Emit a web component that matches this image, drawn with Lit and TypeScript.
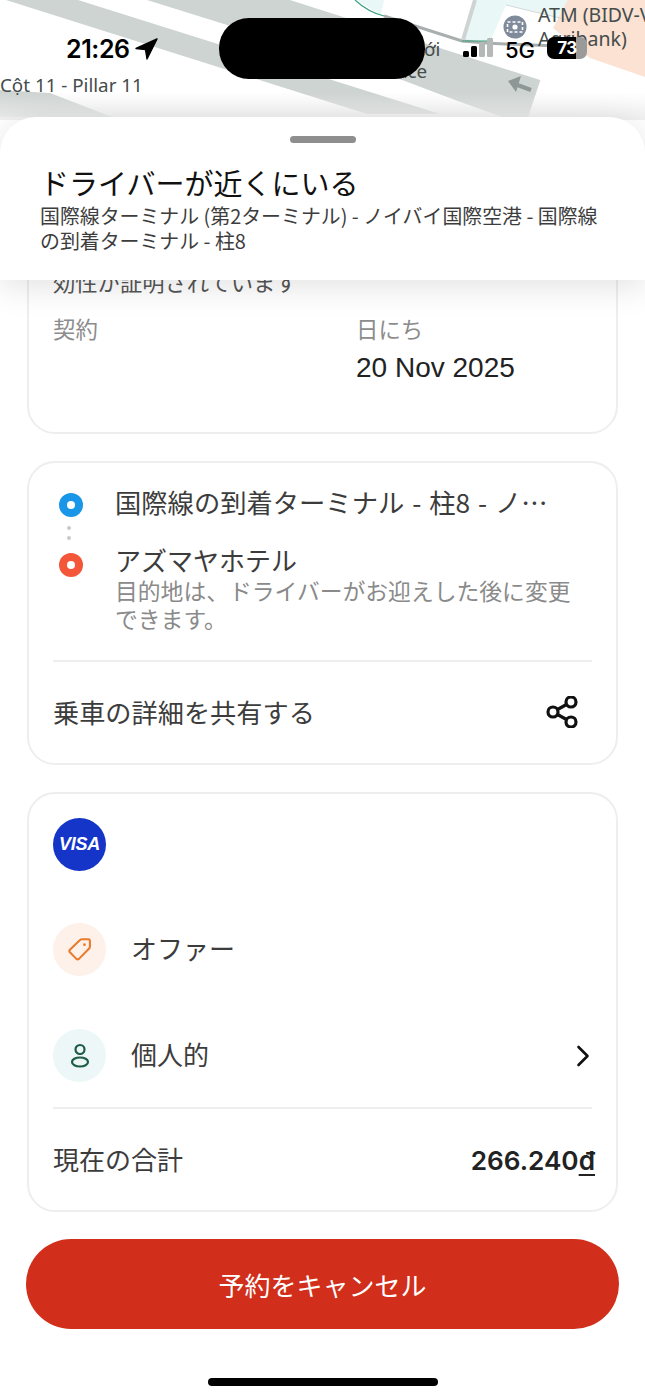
import { LitElement, html, css, svg } from "lit";
import { customElement } from "lit/decorators.js";

const mapArt = svg`
  <rect width="645" height="140" fill="#ffffff"/>
  <polygon points="78,0 440,114 367,114 6,0" fill="#ced4d2"/>
  <polygon points="147,0 290,0 540,80 525,125 455,100 397,78" fill="#ced4d2"/>
  <polygon points="0,90 50,93 112,117 0,117" fill="#ced4d2"/>
  <polygon points="356,0 384,0 381,15" fill="#e9f7f6"/>
  <polygon points="476,0 568,0 568,20 506,5 490,42 462,41" fill="#e9f7f6"/>
  <polygon points="568,0 645,0 645,77 590,58 553,28" fill="#fbe2d2"/>
  <path d="M506 5 L568 20" fill="none" stroke="#d5d8d8" stroke-width="1"/>
  <path d="M540 80 L525 125" fill="none" stroke="#d5d8d8" stroke-width="1"/>
  <path d="M355 0 Q368 12 384 16" fill="none" stroke="#3aa27c" stroke-width="1.2"/>
  <path d="M384 16 L462 41 Q490 44 560 46" fill="none" stroke="#a9aeae" stroke-width="3"/>
  <path d="M475 0 L463 40" fill="none" stroke="#ced4d2" stroke-width="4"/>
  <path d="M462 41 H490 L492 38" fill="none" stroke="#3aa27c" stroke-width="1.2"/>
  <circle cx="515" cy="27" r="11.5" fill="#7f8a9b"/>
  <rect x="507.5" y="22" width="15" height="10" fill="none" stroke="#ffffff" stroke-width="1.6" stroke-dasharray="3 2"/>
  <circle cx="515" cy="27" r="2.6" fill="#ffffff"/>
  <path d="M512 83 L531 90" fill="none" stroke="#8f9796" stroke-width="4"/>
  <polygon points="508,81 521,76 516,92" fill="#8f9796"/>
`;

@customElement("app-root")
export class AppRoot extends LitElement {
  static styles = css`
    :host {
      display: block;
      position: relative;
      width: 645px;
      height: 1400px;
      overflow: hidden;
      background: #ffffff;
      font-family: "Noto Sans CJK JP", "Liberation Sans", sans-serif;
      color: #333333;
    }
    .map {
      position: absolute;
      inset: 0 0 auto 0;
      height: 140px;
      overflow: hidden;
    }
    .map svg { display: block; width: 645px; height: 140px; }
    .fade {
      position: absolute;
      inset: 92px 0 auto 0;
      height: 28px;
      background: linear-gradient(rgba(255,255,255,0), rgba(238,238,238,0.92));
    }
    .lbl {
      position: absolute;
      font-family: "Noto Sans", "Open Sans", sans-serif;
      font-size: 18.8px;
      line-height: 24px;
      color: #444c4c;
      white-space: nowrap;
    }
    .l1 { left: 0; top: 73px; }
    .l2 { left: 538px; top: 3px; font-size: 19.5px; }
    .l3 { left: 538px; top: 27px; font-size: 19.5px; }
    .l4 { left: 424px; top: 37px; }
    .l5 { left: 397px; top: 59px; }
    .pill {
      position: absolute;
      left: 219px;
      top: 18px;
      width: 206px;
      height: 61px;
      border-radius: 30px;
      background: #000000;
    }
    .time {
      position: absolute;
      left: 66px;
      top: 32px;
      display: flex;
      align-items: center;
      gap: 5px;
      font-family: "Inter", sans-serif;
      font-weight: 600;
      font-size: 25px;
      line-height: 34px;
      color: #000000;
      letter-spacing: -0.4px;
    }
    .signal {
      position: absolute;
      left: 463px;
      top: 38px;
      display: flex;
      align-items: flex-end;
      gap: 2px;
      height: 19px;
    }
    .signal i { display: block; width: 6px; border-radius: 1.5px; background: #000000; }
    .signal i:nth-child(1) { height: 6px; }
    .signal i:nth-child(2) { height: 11px; }
    .signal i:nth-child(3) { height: 15px; background: #b4b8b7; }
    .signal i:nth-child(4) { height: 19px; background: #b4b8b7; }
    .fiveg {
      position: absolute;
      left: 505px;
      top: 33px;
      font-family: "Inter", sans-serif;
      font-weight: 500;
      font-size: 22px;
      line-height: 34px;
      color: #000000;
    }
    .batt {
      position: absolute;
      left: 547px;
      top: 37px;
      width: 40px;
      height: 22px;
      border-radius: 7px;
      background: linear-gradient(90deg, #000000 0, #000000 73%, #9a9a9a 73%);
      color: #ffffff;
      display: flex;
      align-items: center;
      justify-content: center;
      font-family: "Inter", sans-serif;
      font-weight: 700;
      font-size: 17px;
      letter-spacing: -0.5px;
    }
    .sheet { position: relative; padding-top: 117px; }
    .head {
      position: relative;
      z-index: 2;
      height: 163px;
      box-sizing: border-box;
      padding: 19px 40px 0;
      background: #ffffff;
      border-radius: 36px 36px 0 0;
      box-shadow: 0 6px 34px rgba(0,0,0,0.12);
    }
    .grab {
      width: 66px;
      height: 7px;
      margin: 0 auto;
      border-radius: 4px;
      background: #8e8e8e;
    }
    .title {
      margin: 19px 0 0;
      font-size: 29px;
      line-height: 40px;
      font-weight: 400;
      color: #111111;
      white-space: nowrap;
    }
    .sub {
      margin: 1px 0 0;
      font-size: 19.9px;
      line-height: 25px;
      color: #3d3d3d;
      width: 570px;
    }
    .body {
      display: flex;
      flex-direction: column;
      gap: 27px;
      padding: 0 27px;
      height: 1100px;
      overflow: hidden;
    }
    .card {
      border: 2px solid #eeeeee;
      border-radius: 28px;
      background: #ffffff;
      box-sizing: border-box;
      flex: none;
    }
    .c1 {
      height: 200px;
      margin-top: -46px;
      padding: 30px 24px 0;
    }
    .c1 .note {
      font-size: 22.3px;
      line-height: 30px;
      color: #555555;
      white-space: nowrap;
    }
    .grid {
      display: grid;
      grid-template-columns: 303px 1fr;
      margin-top: 16px;
    }
    .k { font-size: 22.4px; line-height: 32px; color: #8c8c8c; }
    .v {
      margin-top: 5px;
      font-family: "Liberation Sans", sans-serif;
      font-size: 28px;
      line-height: 38px;
      color: #222222;
    }
    .c2 { height: 304px; padding: 0 24px; }
    .route { display: grid; grid-template-columns: 38px 1fr; column-gap: 24px; padding-top: 21px; }
    .dot {
      width: 24px;
      height: 24px;
      border-radius: 50%;
      display: flex;
      align-items: center;
      justify-content: center;
      margin-left: 6px;
    }
    .dot::after {
      content: "";
      width: 8px;
      height: 8px;
      border-radius: 50%;
      background: #ffffff;
    }
    .dot.blue { background: #1996e8; margin-top: 9px; }
    .dot.red { background: #f4563a; margin-top: 10px; }
    .ticks {
      display: flex;
      flex-direction: column;
      align-items: center;
      gap: 6px;
      width: 32px;
      padding-top: 6px;
    }
    .ticks i { width: 4px; height: 4px; border-radius: 50%; background: #c6cacc; }
    .t {
      font-size: 26px;
      line-height: 36px;
      color: #3c3c3c;
      white-space: nowrap;
    }
    .t.clip {
      width: 433px;
      overflow: hidden;
      text-overflow: ellipsis;
      font-size: 26.3px;
      word-spacing: 2px;
    }
    .t.tight { line-height: 34px; }
    .col { display: flex; flex-direction: column; }
    .gap { height: 23px; }
    .hint {
      font-size: 22.8px;
      line-height: 28px;
      color: #8a8a8a;
      width: 470px;
    }
    .rule { height: 2px; background: #eeeeee; }
    .c2 .rule { margin-top: 27px; }
    .row { display: flex; align-items: center; justify-content: space-between; }
    .share { height: 100px; padding-right: 14px; }
    .share .t { font-size: 26.2px; }
    .share svg { display: block; }
    .c3 { height: 420px; padding: 24px 24px 0; }
    .visa {
      width: 53px;
      height: 53px;
      border-radius: 50%;
      background: #1435c8;
      color: #ffffff;
      display: flex;
      align-items: center;
      justify-content: center;
      font-family: "Liberation Sans", sans-serif;
      font-style: italic;
      font-weight: 700;
      font-size: 18px;
      letter-spacing: -0.3px;
    }
    .opt { display: flex; align-items: center; gap: 25px; height: 53px; }
    .opt .t { padding-bottom: 4px; }
    .opt.o1 { margin-top: 52px; }
    .opt.o2 { margin-top: 53px; padding-right: 2px; }
    .circle {
      width: 53px;
      height: 53px;
      border-radius: 50%;
      flex: none;
      display: flex;
      align-items: center;
      justify-content: center;
    }
    .orange { background: #fdf1ea; }
    .teal { background: #edf7f7; }
    .grow { flex: 1; }
    .c3 .rule { margin-top: 25px; }
    .total { height: 104px; margin-right: -3px; }
    .total .t { padding-bottom: 4px; }
    .amount {
      padding-bottom: 2px;
      font-family: "Inter", sans-serif;
      font-weight: 600;
      font-size: 26.2px;
      color: #222222;
    }
    .amount u { text-underline-offset: 4px; text-decoration-thickness: 2px; }
    .cancel {
      flex: none;
      margin: 0 -1px;
      height: 90px;
      border: 0;
      border-radius: 45px;
      background: #d12e1b;
      color: #ffffff;
      display: flex;
      align-items: center;
      justify-content: center;
      font-family: inherit;
      font-size: 26px;
      font-weight: 400;
    }
    .home {
      position: absolute;
      left: 208px;
      top: 1378px;
      width: 230px;
      height: 8px;
      border-radius: 4px;
      background: #000000;
    }
  `;

  render() {
    return html`
      <div class="map">
        <svg viewBox="0 0 645 140" aria-hidden="true">${mapArt}</svg>
        <div class="fade"></div>
        <span class="lbl l1">Cột 11 - Pillar 11</span>
        <span class="lbl l2">ATM (BIDV-V</span>
        <span class="lbl l3">Agribank)</span>
        <span class="lbl l4">ới</span>
        <span class="lbl l5">ace</span>
      </div>
      <div class="time">
        21:26
        <svg width="23" height="22" viewBox="0 0 23 22"><path d="M22 1 L1 10.5 L10.5 11.5 L12 21 Z" fill="#000" stroke="#000" stroke-width="1.4" stroke-linejoin="round"/></svg>
      </div>
      <div class="pill"></div>
      <div class="signal"><i></i><i></i><i></i><i></i></div>
      <div class="fiveg">5G</div>
      <div class="batt">73</div>

      <div class="sheet">
        <header class="head">
          <div class="grab"></div>
          <h1 class="title">ドライバーが近くにいる</h1>
          <p class="sub">国際線ターミナル (第2ターミナル) - ノイバイ国際空港 - 国際線の到着ターミナル - 柱8</p>
        </header>
        <div class="body">
          <section class="card c1">
            <div class="note">効性が証明されています</div>
            <div class="grid">
              <div class="k">契約</div>
              <div>
                <div class="k">日にち</div>
                <div class="v">20 Nov 2025</div>
              </div>
            </div>
          </section>

          <section class="card c2">
            <div class="route">
              <div class="col">
                <span class="dot blue"></span>
              </div>
              <div class="t clip">国際線の到着ターミナル - 柱8 - ノイバイ国際空港</div>
              <div class="ticks"><i></i><i></i></div>
              <div class="gap"></div>
              <div class="col">
                <span class="dot red"></span>
              </div>
              <div class="col">
                <div class="t tight">アズマヤホテル</div>
                <div class="hint">目的地は、ドライバーがお迎えした後に変更できます。</div>
              </div>
            </div>
            <div class="rule"></div>
            <div class="row share">
              <span class="t">乗車の詳細を共有する</span>
              <svg width="32" height="32" viewBox="0 0 32 32" fill="none" stroke="#111" stroke-width="3.2">
                <circle cx="7" cy="16" r="5"/>
                <circle cx="25" cy="6" r="5"/>
                <circle cx="25" cy="26" r="5"/>
                <path d="M11.5 13.5 L20.5 8.5 M11.5 18.5 L20.5 23.5"/>
              </svg>
            </div>
          </section>

          <section class="card c3">
            <div class="visa">VISA</div>
            <div class="opt o1">
              <span class="circle orange">
                <svg width="24" height="24" viewBox="0 0 23 23" fill="none" stroke="#e97b2c" stroke-width="2" stroke-linejoin="round">
                  <path d="M1.8 11.2 L11.5 2 Q12.3 1.2 13.5 1.2 L19.5 1.2 Q21 1.2 21 2.7 L21 8.5 Q21 9.5 20 10.4 L10.5 20 Q9.2 21 8 20 L1.8 13.7 Q0.8 12.4 1.8 11.2 Z"/>
                  <circle cx="15.8" cy="6.4" r="1.3" fill="#e97b2c" stroke="none"/>
                </svg>
              </span>
              <span class="t">オファー</span>
            </div>
            <div class="opt o2">
              <span class="circle teal">
                <svg width="20" height="26" viewBox="0 0 20 26" fill="none" stroke="#1c5b44" stroke-width="2.2">
                  <circle cx="10" cy="6.5" r="4.5"/>
                  <ellipse cx="10" cy="19" rx="8" ry="4.5"/>
                </svg>
              </span>
              <span class="t grow">個人的</span>
              <svg width="14" height="22" viewBox="0 0 14 22" fill="none" stroke="#111" stroke-width="2.6" stroke-linecap="round" stroke-linejoin="round">
                <path d="M2.5 2 L11.5 11 L2.5 20"/>
              </svg>
            </div>
            <div class="rule"></div>
            <div class="row total">
              <span class="t">現在の合計</span>
              <span class="amount">266.240<u>đ</u></span>
            </div>
          </section>

          <button class="cancel">予約をキャンセル</button>
        </div>
      </div>
      <div class="home"></div>
    `;
  }
}
